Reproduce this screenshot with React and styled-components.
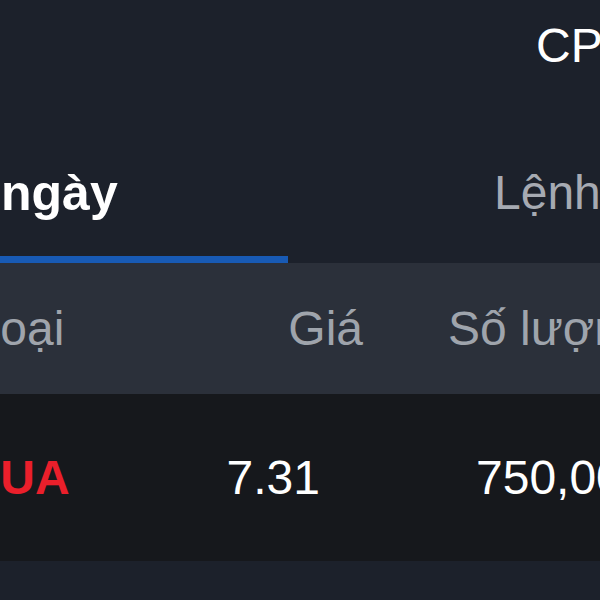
import React from "react";
import styled, { createGlobalStyle } from "styled-components";

const GlobalStyle = createGlobalStyle`
  html, body {
    margin: 0;
    padding: 0;
    background: #1c212b;
    overflow: hidden;
  }
  body {
    font-family: "Liberation Sans", Arial, sans-serif;
  }
`;

const Screen = styled.div`
  width: 600px;
  height: 600px;
  display: flex;
  flex-direction: column;
  background: #1c212b;
  overflow: hidden;
`;

const TopBar = styled.div`
  display: flex;
  padding: 22px 0 0 536px;
  height: 48px;
`;

const Title = styled.span`
  color: #ffffff;
  font-size: 48px;
  line-height: 48px;
  white-space: nowrap;
`;

const TabBar = styled.div`
  display: flex;
  align-items: flex-end;
  height: 193px;
`;

const Tab = styled.div`
  width: ${(p) => p.$width}px;
  flex-shrink: 0;
  padding: 0 0 39px ${(p) => p.$indent || 0}px;
  box-sizing: border-box;
  border-bottom: 7px solid ${(p) => (p.$active ? "#185ab4" : "transparent")};
  color: ${(p) => (p.$active ? "#ffffff" : "#a6aab2")};
  font-weight: ${(p) => (p.$active ? 700 : 400)};
  font-size: ${(p) => (p.$active ? 50 : 48)}px;
  line-height: 48px;
  white-space: nowrap;
`;

const Table = styled.div`
  display: flex;
  flex-direction: column;
  margin-left: -60px;
  width: 660px;
`;

const Row = styled.div`
  display: grid;
  grid-template-columns: ${(p) => p.$cols};
  align-items: center;
  height: ${(p) => p.$height}px;
  background: ${(p) => p.$bg};
`;

const Cell = styled.div`
  text-align: ${(p) => p.$align || "left"};
  padding-left: ${(p) => p.$indent || 0}px;
  font-size: 48px;
  line-height: 48px;
  white-space: nowrap;
  color: ${(p) => p.$color || "#ffffff"};
  font-weight: ${(p) => (p.$bold ? 700 : 400)};
`;

export default function App() {
  return (
    <>
      <GlobalStyle />
      <Screen>
        <TopBar>
          <Title>CP</Title>
        </TopBar>
        <TabBar>
          <Tab $width={288} $indent={1} $active>
            ngày
          </Tab>
          <Tab $width={312} $indent={206}>
            Lệnh
          </Tab>
        </TabBar>
        <Table>
          <Row $cols="158px 265px 1fr" $height={131} $bg="#2b303a">
            <Cell $align="center" $color="#9fa4ac">
              Loại
            </Cell>
            <Cell $align="right" $color="#9fa4ac">
              Giá
            </Cell>
            <Cell $indent={85} $color="#9fa4ac">
              Số lượng
            </Cell>
          </Row>
          <Row $cols="150px 230px 1fr" $height={167} $bg="#16181c">
            <Cell $align="center" $color="#ea1f2b" $bold>
              MUA
            </Cell>
            <Cell $align="right">7.31</Cell>
            <Cell $indent={156}>750,000</Cell>
          </Row>
        </Table>
      </Screen>
    </>
  );
}
